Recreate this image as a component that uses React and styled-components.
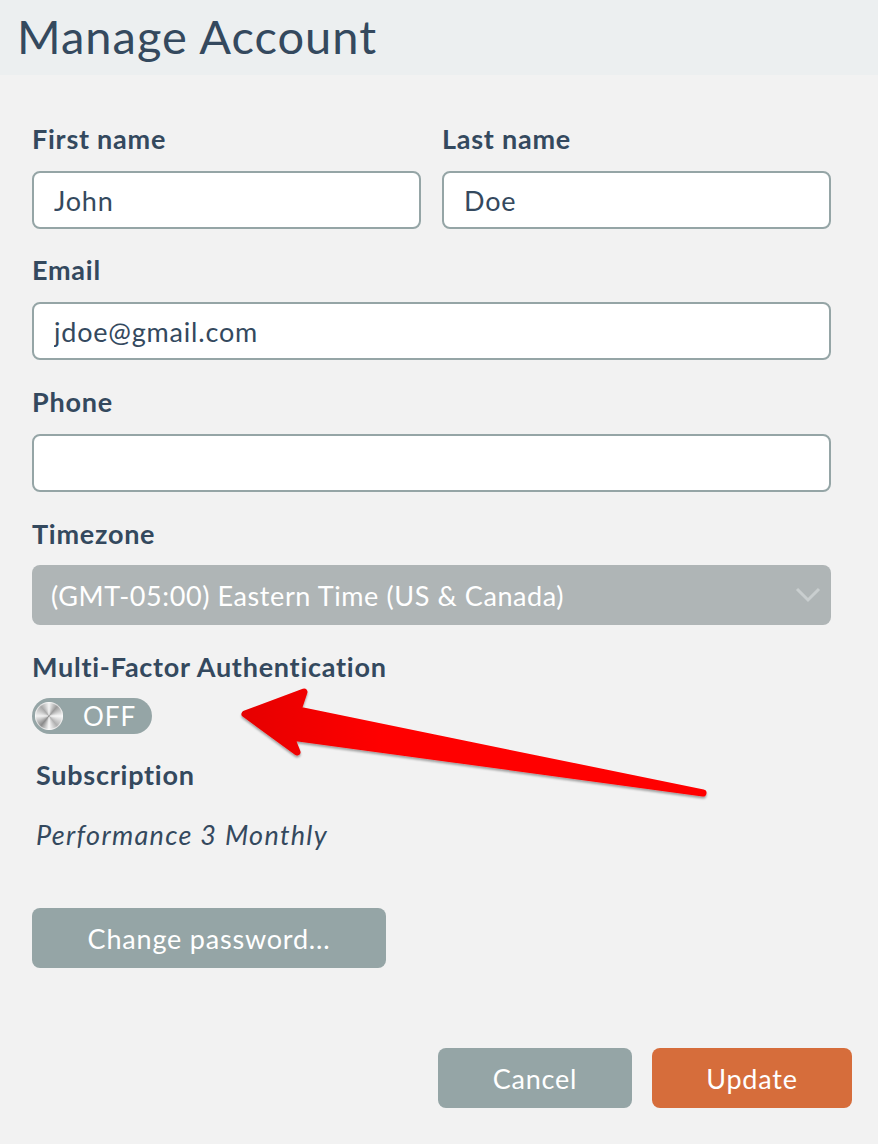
import React from "react";
import styled, { createGlobalStyle } from "styled-components";

const FONT = `Lato, "Open Sans", "Noto Sans", sans-serif`;

const Global = createGlobalStyle`
  html, body { margin: 0; padding: 0; background: #f2f2f2; }
  body { font-family: ${FONT}; color: #34495e; }
  * { box-sizing: border-box; }
`;

const Page = styled.div`
  position: relative;
  width: 878px;
  min-height: 1144px;
  background: #f2f2f2;
`;

const Header = styled.header`
  height: 75px;
  background: #eceff0;
  display: flex;
  align-items: flex-start;
  padding-left: 17px;
`;

const Title = styled.h1`
  margin: 0;
  font-weight: 400;
  font-size: 47px;
  line-height: 72px;
  color: #34495e;
  letter-spacing: 1px;
`;

const Form = styled.div`
  padding: 49px 47px 0 32px;
  display: flex;
  flex-direction: column;
`;

const Row = styled.div`
  display: grid;
  grid-template-columns: 1fr 1fr;
  column-gap: 21px;
`;

const Field = styled.div`
  display: flex;
  flex-direction: column;
  margin-bottom: ${(p) => p.$mb ?? 27}px;
  padding-left: ${(p) => p.$indent ?? 0}px;
`;

const Label = styled.label`
  font-weight: 700;
  font-size: 27px;
  line-height: 30px;
  letter-spacing: 0.75px;
  color: #34495e;
  margin-bottom: ${(p) => p.$mb ?? 17}px;
`;

const Input = styled.input`
  height: 58px;
  width: 100%;
  border: 2px solid #95a5a6;
  border-radius: 8px;
  background: #fff;
  padding: 0 20px;
  font-family: ${FONT};
  font-size: 27px;
  letter-spacing: 0.8px;
  color: #34495e;
  outline: none;
`;

const Select = styled.div`
  height: 60px;
  border-radius: 8px;
  background: #afb5b6;
  display: flex;
  align-items: center;
  justify-content: space-between;
  padding: 0 10px 0 19px;
  font-size: 27px;
  letter-spacing: 0.6px;
  color: #fff;
`;

const Toggle = styled.div`
  width: 120px;
  height: 36px;
  border-radius: 18px;
  background: #95a5a6;
  display: flex;
  align-items: center;
  padding-left: 3px;
  gap: 20px;
  color: #fff;
  font-size: 26px;
  letter-spacing: 1px;
  margin-bottom: 26px;
`;

const Knob = styled.span`
  width: 28px;
  height: 28px;
  border-radius: 50%;
  background: conic-gradient(
    from 0deg,
    #f4f4f4 0deg,
    #9a9a9a 40deg,
    #f8f8f8 90deg,
    #b0b0b0 140deg,
    #fafafa 180deg,
    #8a8a8a 220deg,
    #f2f2f2 270deg,
    #a8a8a8 320deg,
    #f4f4f4 360deg
  );
  box-shadow: inset 0 0 0 1px rgba(255, 255, 255, 0.6);
`;

const Value = styled.div`
  font-style: italic;
  font-size: 27px;
  line-height: 30px;
  letter-spacing: 1.3px;
  color: #34495e;
  padding-left: 4px;
  margin-bottom: 58px;
`;

const Button = styled.button`
  height: 60px;
  width: ${(p) => p.$w}px;
  border: none;
  border-radius: 8px;
  background: ${(p) => (p.$primary ? "#d66d3b" : "#95a5a6")};
  color: #fff;
  font-family: ${FONT};
  font-size: 27px;
  letter-spacing: 0.8px;
  cursor: pointer;
  padding: 0;
`;

const Footer = styled.div`
  display: flex;
  justify-content: flex-end;
  gap: 20px;
  margin-top: 80px;
  margin-right: -21px;
`;

const ArrowSvg = styled.svg`
  position: absolute;
  left: 0;
  top: 0;
  pointer-events: none;
`;

function Arrow() {
  return (
    <ArrowSvg width="878" height="1144" viewBox="0 0 878 1144">
      <defs>
        <linearGradient id="ag" x1="0" y1="0" x2="1" y2="0">
          <stop offset="0" stopColor="#e60000" />
          <stop offset="0.3" stopColor="#ff0000" />
          <stop offset="1" stopColor="#ff0000" />
        </linearGradient>
        <filter id="sh" x="-10%" y="-20%" width="120%" height="150%">
          <feDropShadow dx="0" dy="2" stdDeviation="1" floodColor="#000" floodOpacity="0.35" />
        </filter>
      </defs>
      <path
        d="M245 714 L304 692 L298 710 L703 793 L291 737 L297 752 Z"
        fill="url(#ag)"
        stroke="url(#ag)"
        strokeWidth="7"
        strokeLinejoin="round"
        filter="url(#sh)"
      />
    </ArrowSvg>
  );
}

export default function App() {
  return (
    <Page>
      <Global />
      <Header>
        <Title>Manage Account</Title>
      </Header>
      <Form>
        <Row>
          <Field $mb={26}>
            <Label>First name</Label>
            <Input defaultValue="John" />
          </Field>
          <Field $mb={26}>
            <Label>Last name</Label>
            <Input defaultValue="Doe" />
          </Field>
        </Row>
        <Field>
          <Label>Email</Label>
          <Input defaultValue="jdoe@gmail.com" />
        </Field>
        <Field>
          <Label>Phone</Label>
          <Input defaultValue="" />
        </Field>
        <Field>
          <Label $mb={16}>Timezone</Label>
          <Select>
            <span>(GMT-05:00) Eastern Time (US &amp; Canada)</span>
            <svg width="26" height="18" viewBox="0 0 26 18">
              <path d="M2 3 L13 14 L24 3" fill="none" stroke="#c9cecf" strokeWidth="3" />
            </svg>
          </Select>
        </Field>
        <Field $mb={0}>
          <Label $mb={16}>Multi-Factor Authentication</Label>
          <Toggle>
            <Knob />
            <span>OFF</span>
          </Toggle>
        </Field>
        <Field $mb={30} $indent={4}>
          <Label $mb={0}>Subscription</Label>
        </Field>
        <Value>Performance 3 Monthly</Value>
        <div>
          <Button $w={354}>Change password...</Button>
        </div>
        <Footer>
          <Button $w={194}>Cancel</Button>
          <Button $w={200} $primary>Update</Button>
        </Footer>
      </Form>
      <Arrow />
    </Page>
  );
}
